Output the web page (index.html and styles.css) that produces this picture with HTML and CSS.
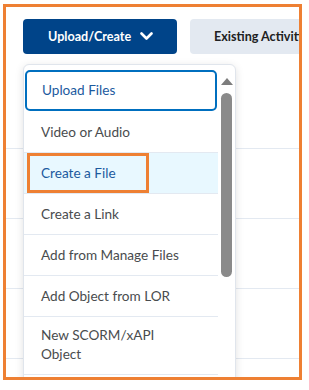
FILE: index.html
```html
<!DOCTYPE html>
<html lang="en">
<head>
  <meta charset="UTF-8">
  <meta name="viewport" content="width=device-width, initial-scale=1.0">
  <title>Upload/Create</title>
  <link rel="stylesheet" href="styles.css">
</head>
<body>
  <div class="frame">
    <div class="toolbar">
      <button class="btn btn-primary">Upload/Create
        <svg class="chevron" width="13" height="9" viewBox="0 0 13 9"><path d="M1.5 1.5 L6.5 6.5 L11.5 1.5" fill="none" stroke="#fff" stroke-width="2.6" stroke-linecap="round" stroke-linejoin="round"/></svg>
      </button>
      <button class="btn btn-secondary">Existing Activities</button>
    </div>

    <div class="rows">
      <div class="row"></div>
      <div class="row"></div>
      <div class="row"></div>
      <div class="row"></div>
    </div>

    <div class="dropdown">
      <ul class="menu">
        <li class="item focused">Upload Files</li>
        <li class="item">Video or Audio</li>
        <li class="item hover">Create a File<span class="callout"></span></li>
        <li class="item">Create a Link</li>
        <li class="item">Add from Manage Files</li>
        <li class="item">Add Object from LOR</li>
        <li class="item last">New SCORM/xAPI<br>Object</li>
      </ul>
      <div class="scrollbar">
        <div class="arrow"></div>
        <div class="thumb"></div>
      </div>
    </div>
  </div>
</body>
</html>
```

FILE: styles.css
```css
body {
  margin: 0;
  background: #fff;
  font-family: Lato, "Open Sans", sans-serif;
}
.frame {
  position: relative;
  margin: 4px 0 0 3px;
  width: 299px;
  height: 376px;
  box-sizing: border-box;
  border: 3px solid #ee8033;
  overflow: hidden;
  background: #fff;
}
.toolbar {
  display: flex;
  gap: 13px;
  padding: 12px 0 0 17px;
  white-space: nowrap;
}
.btn {
  height: 35px;
  border: none;
  border-radius: 4px;
  font-family: Lato, sans-serif;
  font-size: 12.6px;
  font-weight: 700;
  display: flex;
  align-items: center;
  flex-shrink: 0;
}
.btn-primary {
  width: 154px;
  padding: 0 0 0 25px;
  background: #004489;
  color: #fff;
}
.chevron {
  margin-left: 9px;
}
.btn-secondary {
  padding: 0 24px;
  background: #e3e9f1;
  color: #202122;
}
.rows {
  margin-top: 25px;
}
.row {
  height: 69px;
  border-bottom: 1px solid #e3e9f1;
}
.dropdown {
  position: absolute;
  top: 57px;
  left: 17px;
  width: 213px;
  height: 340px;
  box-sizing: border-box;
  display: flex;
  background: #fff;
  border: 1px solid #e0e5ec;
  border-radius: 6px;
  box-shadow: 0 2px 8px rgba(0,0,0,0.12);
}
.menu {
  list-style: none;
  margin: 0;
  padding: 5px 0 0;
  width: 194px;
}
.item {
  position: relative;
  padding: 11px 16px 10px 17px;
  line-height: 19px;
  font-size: 13.6px;
  color: #494c4e;
  border-top: 1px solid #e3e9f1;
}
.item.focused {
  margin: 0 1px;
  padding: 9px 15px 9px 15px;
  border: 2px solid #006fbf;
  border-radius: 5px;
  color: #1c5a9e;
}
.item.focused + .item {
  border-top-color: transparent;
}
.item.hover {
  background: #e8f8ff;
  color: #1c5a9e;
}
.item.last {
  padding: 9px 16px 10px 17px;
  border-bottom: 1px solid #e3e9f1;
}
.callout {
  position: absolute;
  top: 0;
  left: 3px;
  width: 122px;
  height: 40px;
  box-sizing: border-box;
  border: 3px solid #ee8033;
}
.scrollbar {
  width: 17px;
  padding-top: 13px;
}
.arrow {
  margin-left: 3px;
  width: 0;
  height: 0;
  border-left: 6px solid transparent;
  border-right: 6px solid transparent;
  border-bottom: 7px solid #7d7d7d;
}
.thumb {
  margin: 8px 0 0 3px;
  width: 11px;
  height: 184px;
  border-radius: 6px;
  background: #8a8a8a;
}
```
